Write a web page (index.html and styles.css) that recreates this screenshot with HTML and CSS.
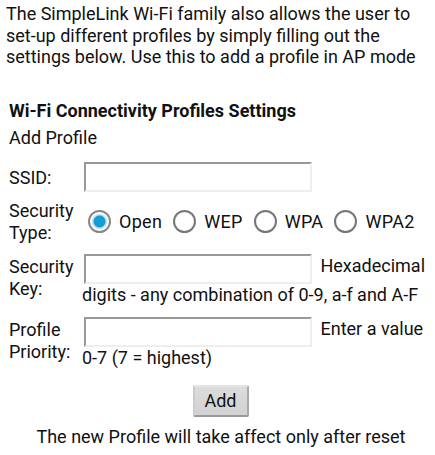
FILE: index.html
```html
<!DOCTYPE html>
<html>
<head>
<meta charset="utf-8">
<link rel="stylesheet" href="styles.css">
</head>
<body>
<p class="intro">The SimpleLink Wi-Fi family also allows the user to set-up different profiles by simply filling out the settings below. Use this to add a profile in AP mode</p>
<div class="section">
  <h3 class="title">Wi-Fi Connectivity Profiles Settings</h3>
  <div class="sub">Add Profile</div>
  <table class="form">
    <tr>
      <td class="label">SSID:</td>
      <td class="field field-ssid"><input type="text" class="text-in"></td>
    </tr>
    <tr>
      <td class="label">Security Type:</td>
      <td class="field">
        <div class="radios">
          <label class="opt"><input type="radio" name="sec" class="radio" checked><span>Open</span></label>
          <label class="opt"><input type="radio" name="sec" class="radio"><span>WEP</span></label>
          <label class="opt"><input type="radio" name="sec" class="radio"><span>WPA</span></label>
          <label class="opt"><input type="radio" name="sec" class="radio"><span>WPA2</span></label>
        </div>
      </td>
    </tr>
    <tr>
      <td class="label">Security Key:</td>
      <td class="field field-key"><input type="text" class="text-in"> Hexadecimal digits - any combination of 0-9, a-f and A-F</td>
    </tr>
    <tr>
      <td class="label">Profile Priority:</td>
      <td class="field field-prio"><input type="text" class="text-in"> Enter a value 0-7 (7 = highest)</td>
    </tr>
  </table>
  <div class="actions"><button class="btn">Add</button></div>
  <div class="note">The new Profile will take affect only after reset</div>
</div>
</body>
</html>
```
FILE: styles.css
```css
html, body {
  margin: 0;
  padding: 0;
  background: #fff;
}
body {
  font-family: Roboto, "Noto Sans", sans-serif;
  font-size: 18px;
  color: #111;
  width: 435px;
  overflow: hidden;
}
.intro {
  margin: 0;
  padding: 3px 4px 0 6px;
  line-height: 21.5px;
}
.section {
  padding: 0 0 0 9px;
}
.title {
  margin: 32px 0 0 0;
  font-size: 18px;
  font-weight: bold;
  line-height: 22px;
}
.sub {
  margin-top: 5px;
  line-height: 22px;
}
.form {
  border-collapse: separate;
  border-spacing: 0;
  margin-top: 9px;
}
.label {
  width: 72px;
  padding: 0;
  vertical-align: middle;
  line-height: 22px;
  padding-right: 1px;
}
.field {
  padding: 4px 0 4px 0;
  line-height: 22px;
  vertical-align: middle;
  width: 345px;
}
.field-ssid {
  padding: 0 0 6px 0;
}
.field-key {
  padding-top: 4px;
}
.field-prio {
  padding-top: 3px;
}
.text-in {
  box-sizing: border-box;
  width: 228px;
  height: 30px;
  margin: 4px 4px 0 2px;
  border: 2px solid;
  border-color: #999 #eee #eee #999;
  background: #fff;
  vertical-align: middle;
  font: inherit;
  padding: 0 4px;
}
.radios {
  display: flex;
  align-items: center;
  height: 40px;
}
.opt {
  display: flex;
  align-items: center;
  margin-right: 5px;
}
.opt span {
  letter-spacing: 0.3px;
}
.radio {
  appearance: none;
  -webkit-appearance: none;
  width: 23px;
  height: 23px;
  margin: 0 8px 0 6px;
  border-radius: 50%;
  border: 2px solid #777;
  background: radial-gradient(circle, #fff 60%, #ddd 100%);
  box-sizing: border-box;
  position: relative;
}
.radio:checked {
  border-color: #888;
  background: radial-gradient(circle, #119fd6 0 5.5px, #cfe3ec 6.5px 7.5px, #fff 8px);
}
.actions {
  text-align: center;
  margin-top: 12px;
  padding-right: 3px;
}
.btn {
  font: inherit;
  color: #111;
  width: 56px;
  height: 32px;
  padding: 0;
  background: linear-gradient(#dcdcdc, #d2d2d2);
  border: 2px solid;
  border-color: #e4e4e4 #aaa #999 #ccc;
  border-radius: 2px;
}
.note {
  text-align: center;
  margin-top: 9px;
  padding-right: 2px;
  line-height: 22px;
}
```
